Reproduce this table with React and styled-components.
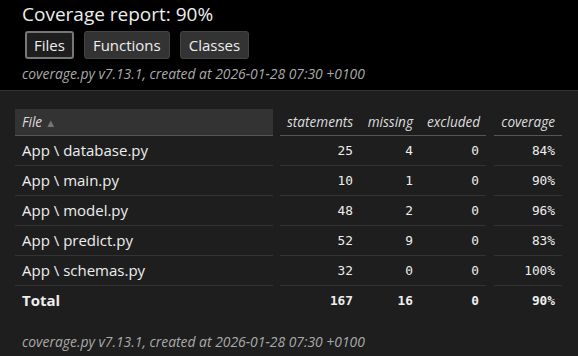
import React from "react";
import styled, { createGlobalStyle } from "styled-components";

const Global = createGlobalStyle`
  html, body { margin: 0; padding: 0; }
  body {
    background: #1e1e1e;
    color: #eee;
    font-family: "Open Sans", "Noto Sans", sans-serif;
  }
`;

const Header = styled.header`
  background: #000;
  border-bottom: 1px solid #333;
  height: 91px;
  box-sizing: border-box;
  padding: 0 22px;
  display: flex;
  flex-direction: column;
`;

const Title = styled.h1`
  margin: 2px 0 0;
  font-size: 19px;
  font-weight: 400;
  line-height: 24px;
  color: #eee;
`;

const Buttons = styled.nav`
  display: flex;
  gap: 10px;
  margin: 5px 0 0 3px;
`;

const Button = styled.a`
  box-sizing: border-box;
  height: 28px;
  padding: 0 ${p => (p.$current ? 7 : 8)}px;
  display: flex;
  align-items: center;
  font-size: 15px;
  color: #eee;
  border-radius: 3px;
  background: ${p => (p.$current ? "#1e1e1e" : "#333")};
  border: ${p => (p.$current ? "2px solid #777" : "1px solid #444")};
`;

const Sub = styled.h2`
  margin: 6px 0 0;
  font-size: 13.9px;
  font-weight: 400;
  font-style: italic;
  line-height: 18px;
  color: #aaa;
`;

const Main = styled.main`
  padding: 18px 15px 0;
`;

const Table = styled.table`
  border-collapse: collapse;
  table-layout: fixed;
  width: 547px;
`;

const Th = styled.th`
  height: 26px;
  padding: 0 7px;
  font-size: 13.6px;
  font-weight: 400;
  font-style: italic;
  color: #ddd;
  text-align: ${p => (p.$left ? "left" : "right")};
  background: ${p => (p.$sorted ? "#333" : "transparent")};
  border-bottom: 1px solid #555;
  box-sizing: border-box;
`;

const Spacer = styled.td`
  padding: 0;
  border: none;
`;

const Td = styled.td`
  height: 29px;
  padding: 0 7px;
  border-bottom: ${p => (p.$last ? "none" : "1px solid #333")};
  text-align: ${p => (p.$left ? "left" : "right")};
  font-family: ${p =>
    p.$left ? `"Open Sans", "Noto Sans", sans-serif` : `"DejaVu Sans Mono", monospace`};
  font-size: ${p => (p.$left ? "15px" : "12.8px")};
  font-weight: ${p => (p.$bold ? 700 : 400)};
  color: #eee;
  white-space: nowrap;
`;

const Arrow = styled.span`
  color: #777;
  font-style: normal;
  font-size: 11px;
  margin-left: 3px;
`;

const Footer = styled.footer`
  padding: 17px 22px 0;
  font-size: 13.9px;
  font-style: italic;
  color: #aaa;
`;

const rows = [
  ["App \\ database.py", 25, 4, 0, "84%"],
  ["App \\ main.py", 10, 1, 0, "90%"],
  ["App \\ model.py", 48, 2, 0, "96%"],
  ["App \\ predict.py", 52, 9, 0, "83%"],
  ["App \\ schemas.py", 32, 0, 0, "100%"],
];

const stamp = "coverage.py v7.13.1, created at 2026-01-28 07:30 +0100";

export default function App() {
  return (
    <>
      <Global />
      <Header>
        <Title>Coverage report: 90%</Title>
        <Buttons>
          <Button $current>Files</Button>
          <Button>Functions</Button>
          <Button>Classes</Button>
        </Buttons>
        <Sub>{stamp}</Sub>
      </Header>
      <Main>
        <Table>
          <colgroup>
            <col style={{ width: 258 }} />
            <col style={{ width: 7 }} />
            <col style={{ width: 80 }} />
            <col style={{ width: 60 }} />
            <col style={{ width: 66 }} />
            <col style={{ width: 8 }} />
            <col style={{ width: 68 }} />
          </colgroup>
          <thead>
            <tr>
              <Th $left $sorted>
                File<Arrow>▲</Arrow>
              </Th>
              <Spacer />
              <Th>statements</Th>
              <Th>missing</Th>
              <Th>excluded</Th>
              <Spacer />
              <Th>coverage</Th>
            </tr>
          </thead>
          <tbody>
            {rows.map(r => (
              <tr key={r[0]}>
                <Td $left>{r[0]}</Td>
                <Spacer />
                <Td>{r[1]}</Td>
                <Td>{r[2]}</Td>
                <Td>{r[3]}</Td>
                <Spacer />
                <Td>{r[4]}</Td>
              </tr>
            ))}
            <tr>
              <Td $left $bold $last>Total</Td>
              <Spacer />
              <Td $bold $last>167</Td>
              <Td $bold $last>16</Td>
              <Td $bold $last>0</Td>
              <Spacer />
              <Td $bold $last>90%</Td>
            </tr>
          </tbody>
        </Table>
      </Main>
      <Footer>{stamp}</Footer>
    </>
  );
}
